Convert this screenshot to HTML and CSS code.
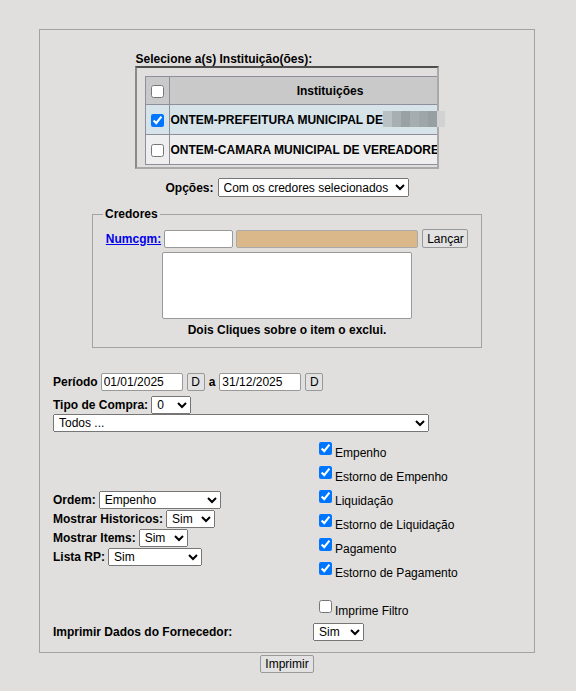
FILE: index.html
```html
<!DOCTYPE html>
<html lang="pt-BR">
<head>
<meta charset="utf-8">
<title>Relatório</title>
<link rel="stylesheet" href="styles.css">
</head>
<body>
<div class="frame">
  <div class="inst">
    <div class="inst-title">Selecione a(s) Instituição(ões):</div>
    <div class="inst-wrap">
      <div class="inst-box">
        <table class="inst-table">
          <tr class="head">
            <th class="chk"><input type="checkbox"></th>
            <th class="name">Instituições</th>
          </tr>
          <tr class="row1">
            <td class="chk"><input type="checkbox" checked></td>
            <td class="name">ONTEM-PREFEITURA MUNICIPAL DE</td>
          </tr>
          <tr class="row2">
            <td class="chk"><input type="checkbox"></td>
            <td class="name">ONTEM-CAMARA MUNICIPAL DE VEREADORES</td>
          </tr>
        </table>
      </div>
      <span class="redact"></span>
    </div>
  </div>

  <div class="opcoes">
    <span class="lbl">Opções:</span>
    <select class="sel sel-opcoes"><option>Com os credores selecionados</option></select>
  </div>

  <fieldset class="credores">
    <legend>Credores</legend>
    <div class="cgm-row">
      <a href="#" class="cgm-link">Numcgm:</a>
      <input type="text" class="inp inp-cgm">
      <input type="text" class="inp inp-nome" readonly>
      <button type="button" class="btn">Lançar</button>
    </div>
    <div class="list-box"></div>
    <div class="hint">Dois Cliques sobre o item o exclui.</div>
  </fieldset>

  <div class="line periodo">
    <span class="lbl first">Período</span>
    <input type="text" class="inp inp-data" value="01/01/2025">
    <button type="button" class="btn btn-d">D</button>
    <span class="lbl">a</span>
    <input type="text" class="inp inp-data" value="31/12/2025">
    <button type="button" class="btn btn-d">D</button>
  </div>

  <div class="line tipo">
    <span class="lbl">Tipo de Compra:</span>
    <select class="sel sel-tipo"><option>0</option></select>
  </div>

  <div class="line todos">
    <select class="sel sel-todos"><option>Todos ...</option></select>
  </div>

  <div class="grid">
    <div class="left">
      <div class="lrow"><span class="lbl">Ordem:</span> <select class="sel sel-ordem"><option>Empenho</option></select></div>
      <div class="lrow"><span class="lbl">Mostrar Historicos:</span> <select class="sel sel-sim"><option>Sim</option></select></div>
      <div class="lrow"><span class="lbl">Mostrar Items:</span> <select class="sel sel-sim"><option>Sim</option></select></div>
      <div class="lrow"><span class="lbl">Lista RP:</span> <select class="sel sel-rp"><option>Sim</option></select></div>
    </div>
    <div class="right">
      <label class="ck"><input type="checkbox" checked><span>Empenho</span></label>
      <label class="ck"><input type="checkbox" checked><span>Estorno de Empenho</span></label>
      <label class="ck"><input type="checkbox" checked><span>Liquidação</span></label>
      <label class="ck"><input type="checkbox" checked><span>Estorno de Liquidação</span></label>
      <label class="ck"><input type="checkbox" checked><span>Pagamento</span></label>
      <label class="ck"><input type="checkbox" checked><span>Estorno de Pagamento</span></label>
      <div class="spacer"></div>
      <label class="ck"><input type="checkbox"><span>Imprime Filtro</span></label>
    </div>
  </div>

  <div class="forn">
    <span class="lbl">Imprimir Dados do Fornecedor:</span>
    <select class="sel sel-forn"><option>Sim</option></select>
  </div>
</div>
<div class="actions">
  <button type="button" class="btn btn-print">Imprimir</button>
</div>
</body>
</html>
```

FILE: styles.css
```css
html, body {
  margin: 0;
  padding: 0;
  background: #e0dfdd;
}
body {
  font-family: "Liberation Sans", Arial, sans-serif;
  font-size: 12px;
  color: #000;
}
.frame {
  margin: 29px 0 0 39px;
  border: 1px solid #a3a3a3;
  padding: 22px 0 11px 13px;
  box-sizing: content-box;
  width: 481px;
}
.lbl {
  font-weight: bold;
}

/* Instituições */
.inst {
  width: 304px;
  margin: 0 auto;
  position: relative;
  left: -7px;
}
.inst-title {
  font-weight: bold;
  line-height: 14px;
  padding-left: 1px;
}
.inst-wrap {
  position: relative;
}
.inst-box {
  overflow: hidden;
  border-style: solid;
  border-width: 2px;
  border-color: #4e4e4e #a9a9a9 #a9a9a9 #8a8a8a;
  padding: 8px 0 0 8px;
  box-sizing: border-box;
  height: 103px;
}
.inst-table {
  border-collapse: collapse;
  width: 347px;
  table-layout: fixed;
}
.inst-table th, .inst-table td {
  border: 1px solid #8e8e9c;
  padding: 0;
  font-weight: bold;
  font-size: 12px;
  white-space: nowrap;
}
.inst-table .head th { background: #c9c9c9; height: 27px; }
.inst-table .row1 td { background: #d6e3e9; height: 29px; }
.inst-table .row2 td { background: #eeeeee; height: 29px; }
.inst-table .chk { width: 23px; text-align: center; }
.inst-table td.name { text-align: left; padding-left: 1px; }
.inst-table th.name { text-align: center; }
.inst-table input { margin: 0; vertical-align: middle; width: 13px; height: 13px; }
.redact {
  position: absolute;
  left: 248px;
  top: 45px;
  width: 62px;
  height: 16px;
  background: linear-gradient(90deg,
    #b9c1c5 0 9px, #a7afb3 9px 18px, #99a1a5 18px 27px, #a5adb1 27px 36px,
    #9ea6aa 36px 45px, #979fa3 45px 54px, #d2d2d2 54px 62px);
}

/* Opções */
.opcoes {
  display: flex;
  justify-content: center;
  align-items: center;
  gap: 4px;
  margin: 9px 0 0 0;
  padding-right: 13px;
}

.sel {
  height: 19px;
  font-family: "Liberation Sans", Arial, sans-serif;
  font-size: 12px;
  padding: 0 0 0 1px;
  box-sizing: border-box;
  color: #000;
}
.sel-opcoes { width: 191px; }
.sel-tipo { width: 40px; height: 18px; }
.sel-todos { width: 376px; height: 18px; }
.sel-ordem { width: 122px; height: 18px; }
.sel-sim { width: 49px; height: 18px; }
.sel-rp { width: 94px; height: 18px; }
.sel-forn { width: 51px; height: 18px; }

/* Credores */
.credores {
  width: 390px;
  box-sizing: border-box;
  margin: 10px 0 0 39px;
  border: 1px solid #a3a3a3;
  padding: 8px 10px 10px;
}
.credores legend {
  font-weight: bold;
  padding: 0 2px;
  line-height: 14px;
}
.cgm-row {
  display: flex;
  justify-content: center;
  align-items: center;
  gap: 3px;
}
.cgm-link {
  color: #0000ee;
  font-weight: bold;
  text-decoration: underline;
}
.inp {
  height: 18px;
  box-sizing: border-box;
  border: 1px solid #999;
  border-radius: 2px;
  background: #fff;
  font-family: "Liberation Sans", Arial, sans-serif;
  font-size: 12px;
  padding: 0 2px;
  margin: 0;
}
.inp-cgm { width: 69px; }
.inp-nome { width: 182px; background: #dbb88a; border-color: #aaa; }
.btn {
  font-family: "Liberation Sans", Arial, sans-serif;
  font-size: 12px;
  height: 18px;
  box-sizing: border-box;
  border: 1px solid #999;
  border-radius: 2px;
  background: #e2e2e2;
  padding: 0 4px;
  margin: 0;
  color: #000;
}
.cgm-row .btn { width: 46px; height: 19px; margin-left: 1px; }
.list-box {
  width: 250px;
  height: 67px;
  box-sizing: border-box;
  margin: 4px auto 0;
  background: #fff;
  border: 1px solid #999;
  border-radius: 2px;
}
.hint {
  text-align: center;
  font-weight: bold;
  line-height: 14px;
  margin-top: 4px;
}

/* Período and others */
.line {
  display: flex;
  align-items: center;
  gap: 3px;
}
.periodo { margin-top: 25px; gap: 4px; }
.periodo .first { margin-right: -1px; }
.inp-data { width: 82px; }
.btn-d { width: 18px; padding: 0; }
.tipo { margin-top: 5px; }
.todos { margin-top: 0; }

/* grid */
.grid {
  display: grid;
  grid-template-columns: 262px 1fr;
  margin-top: 8px;
}
.left {
  align-self: start;
  margin-top: 50px;
}
.lrow {
  display: flex;
  align-items: center;
  gap: 3px;
  height: 19px;
}
.right {
  display: flex;
  flex-direction: column;
}
.ck {
  display: flex;
  align-items: flex-start;
  height: 24px;
  font-size: 12px;
  line-height: 14px;
}
.ck input {
  margin: 2px 3px 0 4px;
  width: 13px;
  height: 13px;
  flex: none;
}
.ck span {
  margin-top: 6px;
}
.spacer { height: 14px; }

.forn {
  display: flex;
  align-items: center;
  margin-top: 1px;
}
.forn .lbl { width: 260px; }

.actions {
  text-align: center;
  padding-right: 2px;
  margin-top: 2px;
}
.btn-print { width: 54px; height: 18px; }
```
